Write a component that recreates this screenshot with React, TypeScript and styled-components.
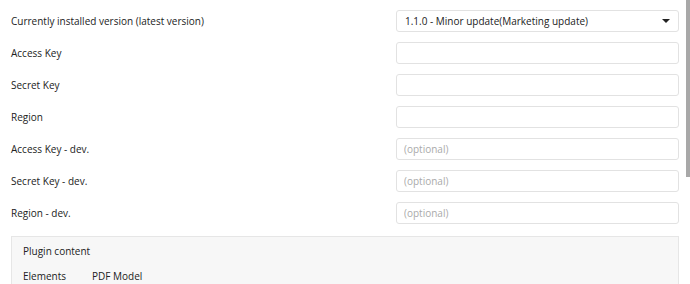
import React from "react";
import styled, { createGlobalStyle } from "styled-components";

const GlobalStyle = createGlobalStyle`
  html, body {
    margin: 0;
    padding: 0;
    background: #ffffff;
    overflow: hidden;
  }
  body {
    font-family: "Open Sans", "Liberation Sans", sans-serif;
    font-size: 10px;
    color: #333333;
  }
`;

const Page = styled.div`
  padding: 10px 11px 0 11px;
  width: 690px;
  box-sizing: border-box;
`;

const Form = styled.div`
  display: grid;
  grid-template-columns: 1fr 283px;
  row-gap: 10px;
  align-items: center;
`;

const Label = styled.div`
  font-size: 10px;
  line-height: 22px;
  color: #222222;
`;

const Field = styled.input`
  box-sizing: border-box;
  height: 22px;
  width: 100%;
  margin: 0;
  padding: 0 7px;
  border: 1px solid #e2e2e2;
  border-radius: 3px;
  background: #ffffff;
  font-family: inherit;
  font-size: 10px;
  color: #333333;
  outline: none;

  &::placeholder {
    color: #aaaaaa;
  }
`;

const Select = styled.div`
  box-sizing: border-box;
  height: 22px;
  display: flex;
  align-items: center;
  justify-content: space-between;
  padding: 0 8px 0 8px;
  border: 1px solid #e2e2e2;
  border-radius: 3px;
  background: #ffffff;
  font-size: 10px;
  color: #222222;
`;

const Caret = styled.span`
  width: 0;
  height: 0;
  border-left: 4px solid transparent;
  border-right: 4px solid transparent;
  border-top: 4px solid #222222;
`;

const Panel = styled.div`
  margin-top: 12px;
  background: #f7f7f7;
  border: 1px solid #e6e6e6;
  border-bottom: none;
  padding: 3px 12px 0 11px;
  height: 50px;
`;

const PanelTitle = styled.div`
  line-height: 22px;
  margin-bottom: 3px;
  color: #222222;
`;

const PanelRow = styled.div`
  display: flex;
  line-height: 22px;
  color: #222222;
`;

const PanelKey = styled.div`
  width: 69px;
`;

const ScrollThumb = styled.div`
  position: fixed;
  top: 0;
  right: 0;
  width: 4px;
  height: 177px;
  background: #a8a8a8;
`;

const rows = [
  { label: "Access Key", placeholder: "" },
  { label: "Secret Key", placeholder: "" },
  { label: "Region", placeholder: "" },
  { label: "Access Key - dev.", placeholder: "(optional)" },
  { label: "Secret Key - dev.", placeholder: "(optional)" },
  { label: "Region - dev.", placeholder: "(optional)" },
];

const App: React.FC = () => {
  return (
    <>
      <GlobalStyle />
      <Page>
        <Form>
          <Label>Currently installed version (latest version)</Label>
          <Select>
            <span>1.1.0 - Minor update(Marketing update)</span>
            <Caret />
          </Select>
          {rows.map((r) => (
            <React.Fragment key={r.label}>
              <Label>{r.label}</Label>
              <Field placeholder={r.placeholder} />
            </React.Fragment>
          ))}
        </Form>
        <Panel>
          <PanelTitle>Plugin content</PanelTitle>
          <PanelRow>
            <PanelKey>Elements</PanelKey>
            <div>PDF Model</div>
          </PanelRow>
        </Panel>
      </Page>
      <ScrollThumb />
    </>
  );
};

export default App;
